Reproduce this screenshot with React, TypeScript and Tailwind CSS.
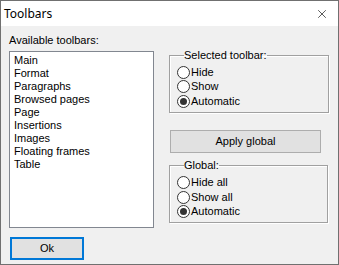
import { X } from 'lucide-react'

type RadioProps = {
  label: string
  checked?: boolean
}

const Radio = ({ label, checked }: RadioProps) => (
  <label className="flex h-[14.5px] items-center">
    <span className="flex h-[13px] w-[13px] items-center justify-center rounded-full border border-[#333333] bg-white">
      {checked && <span className="h-[7px] w-[7px] rounded-full bg-[#333333]" />}
    </span>
    <span className="ml-[1px]">{label}</span>
  </label>
)

const toolbars = [
  'Main',
  'Format',
  'Paragraphs',
  'Browsed pages',
  'Page',
  'Insertions',
  'Images',
  'Floating frames',
  'Table',
]

export default function App() {
  return (
    <div className="flex h-[265px] w-[339px] flex-col border border-[#707070] bg-[#f0f0f0] font-['Liberation_Sans',Arial,sans-serif] text-[11px] leading-[13px] text-black">
      {/* Title bar */}
      <div className="flex h-[25px] items-center justify-between bg-white pl-[3px] pr-[9px]">
        <span className="font-['Noto_Sans',sans-serif] text-[12px]">Toolbars</span>
        <X className="h-[14px] w-[14px]" strokeWidth={1.1} />
      </div>

      <div className="flex flex-1">
        {/* Available toolbars */}
        <div className="ml-[8px] flex flex-col pt-[8px]">
          <span>Available toolbars:</span>
          <ul className="mt-[4px] h-[177px] w-[145px] border border-[#828790] bg-white pl-[4px] pt-[2px]">
            {toolbars.map((name) => (
              <li key={name} className="h-[13px]">
                {name}
              </li>
            ))}
          </ul>
          <button className="ml-[1px] mt-[9px] h-[23px] w-[74px] border-2 border-[#0078d7] bg-[#e1e1e1]">
            Ok
          </button>
        </div>

        {/* Right side */}
        <div className="ml-[15px] flex flex-col pt-[23px]">
          <fieldset className="w-[160px] border border-[#a0a0a0] pb-[3px] pl-[7px] shadow-[inset_1px_1px_0_#fff,1px_1px_0_#fff]">
            <legend className="ml-[7px] px-0">Selected toolbar:</legend>
            <div className="mt-[3px] flex flex-col">
              <Radio label="Hide" />
              <Radio label="Show" />
              <Radio label="Automatic" checked />
            </div>
          </fieldset>

          <button className="ml-[1px] mt-[17px] h-[23px] w-[151px] border border-[#adadad] bg-[#e1e1e1]">
            Apply global
          </button>

          <fieldset className="mt-[6px] w-[159px] border border-[#a0a0a0] pb-[3px] pl-[7px] shadow-[inset_1px_1px_0_#fff,1px_1px_0_#fff]">
            <legend className="ml-[7px] px-0">Global:</legend>
            <div className="mt-[4px] flex flex-col">
              <Radio label="Hide all" />
              <Radio label="Show all" />
              <Radio label="Automatic" checked />
            </div>
          </fieldset>
        </div>
      </div>
    </div>
  )
}
